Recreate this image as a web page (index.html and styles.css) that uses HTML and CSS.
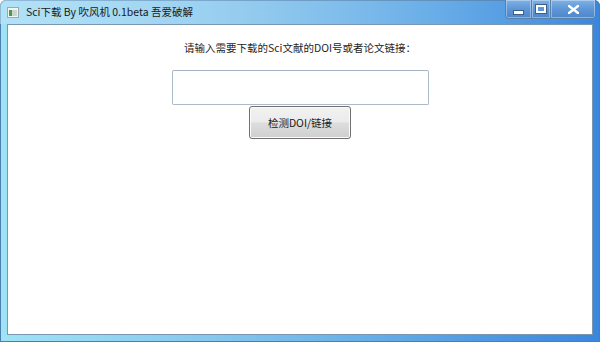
FILE: index.html
```html
<!DOCTYPE html>
<html lang="zh">
<head>
<meta charset="utf-8">
<title>Sci下载</title>
<link rel="stylesheet" href="styles.css">
</head>
<body>
<div class="window">
  <div class="titlebar">
    <svg class="app-icon" width="12" height="11" viewBox="0 0 12 11">
      <rect x="0.5" y="0.5" width="11" height="10" fill="#f4f4f4" stroke="#9aa8b4"/>
      <rect x="2" y="3" width="3" height="6" fill="#4a9a4a"/>
      <rect x="5" y="3" width="5" height="6" fill="#c9d6c9"/>
    </svg>
    <span class="title">Sci下载 By 吹风机 0.1beta 吾爱破解</span>
    <div class="caption">
      <div class="cap-btn cap-min"><span class="glyph-min"></span></div>
      <div class="cap-btn cap-max"><span class="glyph-max"></span></div>
      <div class="cap-btn cap-close">
        <svg width="11" height="9" viewBox="0 0 11 9"><path d="M1 1 L10 8 M10 1 L1 8" stroke="#fff" stroke-width="2.4" stroke-linecap="square"/></svg>
      </div>
    </div>
  </div>
  <div class="client">
    <p class="prompt">请输入需要下载的Sci文献的DOI号或者论文链接：</p>
    <div class="doi-input"></div>
    <button class="check-btn" type="button">检测DOI/链接</button>
  </div>
</div>
</body>
</html>
```
FILE: styles.css
```css
html, body {
  margin: 0;
  padding: 0;
  width: 600px;
  height: 342px;
  overflow: hidden;
  background: #ffffff;
}
.window {
  box-sizing: border-box;
  width: 600px;
  height: 342px;
  display: flex;
  flex-direction: column;
  padding: 0 7px 7px 7px;
  border-radius: 6px 6px 0 0;
  background: linear-gradient(90deg, #9fe3f6 0%, #86c8ee 35%, #5aa6e6 70%, #3a86dc 100%);
  box-shadow: inset 0 0 0 1px #4d7fae;
  font-family: "Microsoft YaHei", "Noto Sans CJK SC", "Liberation Sans", sans-serif;
}
.titlebar {
  height: 24px;
  display: flex;
  align-items: flex-start;
  position: relative;
  background: linear-gradient(90deg, rgba(190,225,245,0.6) 0%, rgba(170,210,240,0.3) 60%, rgba(90,150,220,0) 100%);
  margin: 0 -7px;
  padding: 0 7px;
  border-radius: 6px 6px 0 0;
}
.app-icon {
  margin-top: 7px;
  flex: none;
}
.title {
  margin-left: 7px;
  margin-top: 5px;
  font-size: 10.5px;
  line-height: 14px;
  color: #1a1a1a;
  white-space: nowrap;
}
.caption {
  margin-left: auto;
  display: flex;
  height: 18px;
  margin-right: -3px;
  border: 1px solid #5c7fa6;
  border-top: none;
  border-radius: 0 0 4px 4px;
  overflow: hidden;
}
.cap-btn {
  display: flex;
  align-items: center;
  justify-content: center;
  background: linear-gradient(180deg, #7fb2e4 0%, #5e96d6 50%, #4d88cc 100%);
  box-shadow: inset 0 0 0 1px rgba(255,255,255,0.35);
}
.cap-min { width: 25px; border-right: 1px solid #5c7fa6; }
.cap-max { width: 18px; border-right: 1px solid #5c7fa6; }
.cap-close { width: 44px; }
.glyph-min {
  width: 9px;
  height: 3px;
  margin-top: 6px;
  background: #fff;
  border: 1px solid #3e5f86;
}
.glyph-max {
  width: 6px;
  height: 4px;
  border: 2px solid #fff;
  box-shadow: 0 0 0 1px #3e5f86;
}
.client {
  flex: 1;
  background: #ffffff;
  border: 1px solid #7b96b2;
  display: flex;
  flex-direction: column;
  align-items: center;
}
.prompt {
  margin: 15px 0 0 0;
  font-size: 10.5px;
  line-height: 16px;
  color: #1e1e1e;
}
.doi-input {
  box-sizing: border-box;
  margin-top: 14px;
  width: 257px;
  height: 35px;
  border: 1px solid #abb9c8;
  border-top-color: #a3b3c4;
  border-radius: 2px;
  background: #ffffff;
}
.check-btn {
  box-sizing: border-box;
  margin-top: 1px;
  width: 102px;
  height: 33px;
  padding: 0;
  border: 1px solid #707070;
  border-radius: 3px;
  background: linear-gradient(180deg, #f2f2f2 0%, #ebebeb 48%, #dddddd 52%, #cfcfcf 100%);
  box-shadow: inset 0 0 0 1px #fbfbfb;
  font-family: "Microsoft YaHei", "Noto Sans CJK SC", "Liberation Sans", sans-serif;
  font-size: 10.5px;
  color: #1a1a1a;
}
```
